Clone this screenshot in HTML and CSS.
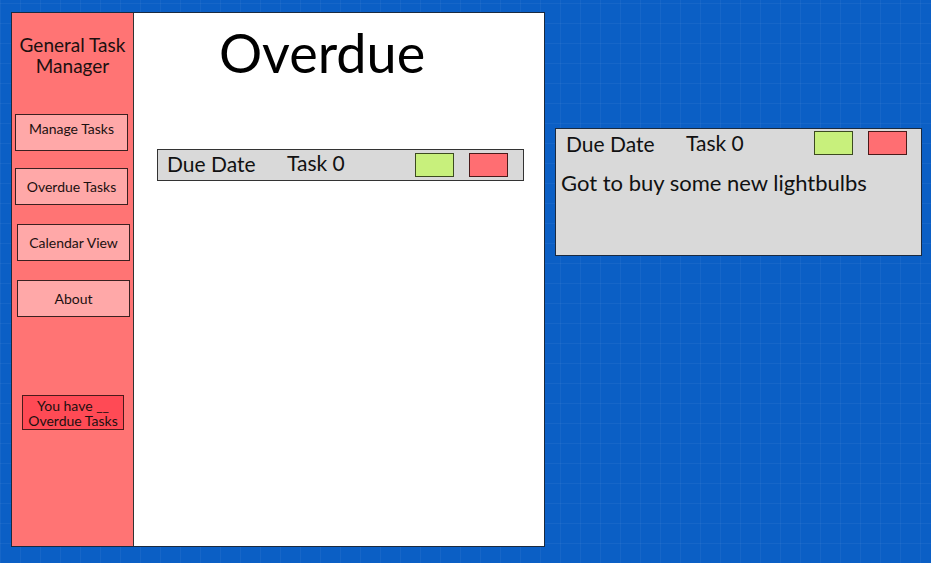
FILE: index.html
```
<!DOCTYPE html>
<html>
<head>
<meta charset="utf-8">
<link rel="stylesheet" href="styles.css">
</head>
<body>
<div class="page">
  <div class="frame">
    <aside class="sidebar">
      <div class="brand">General Task<br>Manager</div>
      <div class="btn b1">Manage Tasks</div>
      <div class="btn b2">Overdue Tasks</div>
      <div class="btn b3">Calendar View</div>
      <div class="btn b4">About</div>
      <div class="badge">You have __<br>Overdue Tasks</div>
    </aside>
    <main class="content">
      <h1 class="title">Overdue</h1>
      <div class="row">
        <span class="date">Due Date</span>
        <span class="task">Task 0</span>
        <span class="sw green"></span>
        <span class="sw red"></span>
      </div>
    </main>
  </div>
  <div class="card">
    <div class="card-head">
      <span class="date">Due Date</span>
      <span class="task">Task 0</span>
      <span class="sw green"></span>
      <span class="sw red"></span>
    </div>
    <div class="desc">Got to buy some new lightbulbs</div>
  </div>
</div>
</body>
</html>
```
FILE: styles.css
```
html, body { margin: 0; padding: 0; }
body {
  width: 931px;
  height: 563px;
  overflow: hidden;
  background-color: #0b5fc5;
  background-image:
    linear-gradient(to right, rgba(255,255,255,0.045) 1px, transparent 1px),
    linear-gradient(to bottom, rgba(255,255,255,0.045) 1px, transparent 1px);
  background-size: 20px 20px;
  background-position: 0px 3px;
  font-family: Lato, "Noto Sans", sans-serif;
  color: #111;
}
.page {
  display: flex;
  align-items: flex-start;
  padding: 12px 0 0 11px;
}
.frame {
  display: flex;
  width: 534px;
  height: 535px;
  box-sizing: border-box;
  border: 1px solid #1a2a40;
  background: #fff;
}
.sidebar {
  width: 122px;
  flex: none;
  background: #ff7474;
  border-right: 1px solid #333;
  display: flex;
  flex-direction: column;
  align-items: stretch;
  box-sizing: border-box;
  padding-top: 21px;
}
.brand {
  text-align: center;
  font-size: 19px;
  line-height: 21px;
  color: #1c1010;
}
.btn {
  background: #ffa8a8;
  border: 1px solid #3a2020;
  height: 37px;
  box-sizing: border-box;
  display: flex;
  align-items: center;
  justify-content: center;
  font-size: 14px;
  color: #1c1010;
  width: 113px;
}
.b1 { margin: 38px 0 0 3px; padding-bottom: 8px; }
.b2 { margin: 17px 0 0 3px; }
.b3 { margin: 19px 0 0 5px; }
.b4 { margin: 19px 0 0 5px; }
.badge {
  margin: 78px 0 0 10px;
  width: 102px;
  height: 35px;
  box-sizing: border-box;
  background: #ff4a55;
  border: 1px solid #4a1a1a;
  font-size: 14px;
  line-height: 15px;
  text-align: center;
  padding-top: 2px;
  color: #1c1010;
}
.content {
  flex: 1;
  display: flex;
  flex-direction: column;
}
.title {
  margin: 10px 0 0 0;
  padding-left: 85px;
  font-weight: 400;
  font-size: 54px;
  line-height: 60px;
  color: #000;
}
.row {
  margin: 66px 0 0 23px;
  width: 367px;
  height: 32px;
  box-sizing: border-box;
  background: #d9d9d9;
  border: 1px solid #333;
  display: flex;
  align-items: center;
  font-size: 21px;
}
.date { margin-left: 9px; width: 120px; }
.row .date { padding-bottom: 3px; }
.task { width: 128px; padding-bottom: 2px; }
.row .task { padding-bottom: 5px; }
.sw {
  width: 39px;
  height: 24px;
  box-sizing: border-box;
  flex: none;
}
.green { background: #c8f07c; border: 1px solid #3c4a20; }
.red { background: #ff6e72; border: 1px solid #4a1a1a; margin-left: 15px; }
.card {
  margin: 116px 0 0 10px;
  width: 367px;
  height: 128px;
  box-sizing: border-box;
  background: #d9d9d9;
  border: 1px solid #1a2a40;
}
.card-head {
  display: flex;
  align-items: center;
  height: 28px;
  margin-top: 0;
  font-size: 21px;
}
.card-head .date { margin-left: 10px; padding-top: 0; }
.desc {
  margin: 12px 0 0 5px;
  font-size: 22px;
}
```
